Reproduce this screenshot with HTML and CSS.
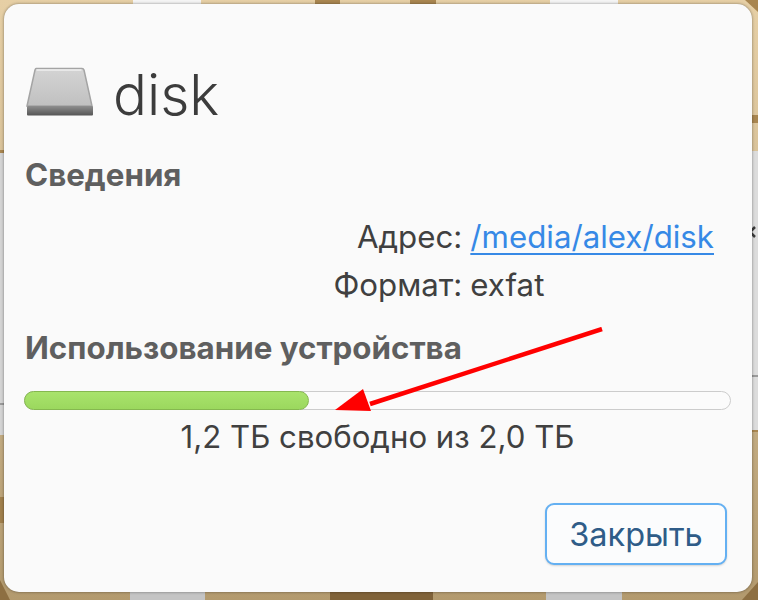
FILE: index.html
```html
<!DOCTYPE html>
<html lang="ru">
<head>
    <meta charset="UTF-8">
    <title>disk</title>
    <link rel="stylesheet" href="styles.css">
</head>
<body>

    <!-- Wallpaper peeking out around the dialog -->
    <svg class="wallpaper" width="758" height="600" viewBox="0 0 758 600">
        <defs>
            <linearGradient id="sand" x1="0" y1="0" x2="0" y2="1">
                <stop offset="0" stop-color="#e6cfa5"/>
                <stop offset="0.5" stop-color="#cdb78f"/>
                <stop offset="1" stop-color="#b39a6e"/>
            </linearGradient>
        </defs>
        <rect width="758" height="600" fill="url(#sand)"/>
        <!-- top edge -->
        <rect x="133" y="0" width="68" height="5" fill="#f4f4f4"/>
        <rect x="550" y="0" width="68" height="5" fill="#f4f4f4"/>
        <rect x="315" y="0" width="25" height="5" fill="#a98650"/>
        <rect x="410" y="0" width="26" height="5" fill="#a98650"/>
        <!-- bottom edge -->
        <rect x="130" y="592" width="75" height="8" fill="#c4c4c4"/>
        <rect x="546" y="592" width="76" height="8" fill="#c4c4c4"/>
        <rect x="330" y="592" width="103" height="8" fill="#80633a"/>
        <!-- left edge -->
        <rect x="0" y="152" width="5" height="283" fill="#d4d4d4"/>
        <rect x="0" y="403" width="5" height="2" fill="#9a9a9a"/>
        <rect x="0" y="150" width="5" height="3" fill="#a98650"/>
        <rect x="0" y="497" width="5" height="26" fill="#a07f4c"/>
        <polygon points="0,600 0,580 10,600" fill="#8d6f42"/>
        <!-- right edge -->
        <rect x="751" y="115" width="7" height="8" fill="#a98650"/>
        <rect x="751" y="151" width="7" height="280" fill="#dcdcdc"/>
        <rect x="751" y="375" width="7" height="2" fill="#9a9a9a"/>
        <rect x="751" y="430" width="7" height="2" fill="#a98650"/>
        <polygon points="745,0 758,0 758,12" fill="#a98650"/>
        <polygon points="758,582 758,600 742,600" fill="#8d6f42"/>
        <path d="M755 227l-5 5 5 5" fill="none" stroke="#3a3a3a" stroke-width="2.5"/>
    </svg>

    <div class="dialog">
        <div class="dialog-head">
            <svg class="disk-icon" width="68" height="50" viewBox="0 0 68 50">
                <defs>
                    <linearGradient id="diskTop" x1="0" y1="0" x2="0" y2="1">
                        <stop offset="0" stop-color="#d4d4d4"/>
                        <stop offset="1" stop-color="#c0c0c0"/>
                    </linearGradient>
                    <linearGradient id="diskFront" x1="0" y1="0" x2="0" y2="1">
                        <stop offset="0" stop-color="#8e8e8e"/>
                        <stop offset="1" stop-color="#555555"/>
                    </linearGradient>
                </defs>
                <path d="M10 1.5h46q1.500 0 2 1.500l8 36h-65l8-36q.5-1.500 1-1.500z" fill="url(#diskTop)" stroke="#a4a4a4" stroke-width="1.500"/>
                <path d="M10.500 3h45" stroke="#efefef" stroke-width="1.500"/>
                <rect x="1" y="39" width="66" height="9.500" rx="1" fill="url(#diskFront)"/>
            </svg>
            <h1 class="dialog-title">disk</h1>
        </div>

        <h2 class="section-title">Сведения</h2>
        <div class="info-grid">
            <span class="info-label">Адрес:</span>
            <a class="info-link" href="#">/media/alex/disk</a>
            <span class="info-label">Формат:</span>
            <span>exfat</span>
        </div>

        <h2 class="section-title usage-title">Использование устройства</h2>
        <div class="usage-bar">
            <div class="usage-fill" style="width: 40.4%"></div>
        </div>
        <div class="usage-text">1,2 ТБ свободно из 2,0 ТБ</div>

        <div class="dialog-actions">
            <button class="close-btn">Закрыть</button>
        </div>

        <!-- Red annotation arrow drawn on the screenshot -->
        <svg class="arrow" width="290" height="100" viewBox="0 0 290 100">
            <path d="M267 2L35 77" stroke="#ff0000" stroke-width="4.500" fill="none"/>
            <polygon points="0,83 28,62 36,84" fill="#ff0000"/>
        </svg>
    </div>

</body>
</html>
```

FILE: styles.css
```css
* {
    box-sizing: border-box;
}

html, body {
    height: 100%;
}

body {
    margin: 0;
    padding: 4px 6px 8px 4px;
    overflow: hidden;
    font-family: 'Inter', 'Noto Sans', sans-serif;
    color: #404040;
    position: relative;
}

.wallpaper {
    position: absolute;
    top: 0;
    left: 0;
}

.dialog {
    position: relative;
    height: 100%;
    display: flex;
    flex-direction: column;
    padding: 0 21px 27px 20px;
    background-color: #fafafa;
    border-radius: 15px;
    box-shadow: 0 0 3px rgba(0, 0, 0, 0.45);
}

.dialog-head {
    display: flex;
    align-items: center;
    gap: 19px;
    margin-top: 57px;
    height: 68px;
}

.disk-icon {
    flex-shrink: 0;
    margin: -7px 0 0 2px;
}

.dialog-title {
    margin: 0;
    font-size: 56.5px;
    font-weight: 300;
    line-height: 68px;
    color: #3c3c3c;
}

.section-title {
    margin: 0;
    padding-left: 1px;
    font-size: 31.3px;
    font-weight: 700;
    line-height: 34px;
    color: #5f5f5f;
}

.dialog-head + .section-title {
    margin-top: 29px;
}

.info-grid {
    display: grid;
    grid-template-columns: auto auto;
    justify-content: end;
    column-gap: 8px;
    row-gap: 10px;
    margin-top: 26px;
    padding-right: 17px;
    font-size: 31.25px;
    line-height: 38px;
}

.info-label {
    text-align: right;
}

.info-link {
    color: #3689e6;
    text-decoration: underline;
    text-underline-offset: 5px;
    text-decoration-thickness: 2px;
}

.usage-title {
    margin-top: 27px;
}

.usage-bar {
    margin-top: 26px;
    height: 19px;
    background-color: #fbfbfb;
    border: 1px solid #cccccc;
    border-radius: 10px;
}

.usage-fill {
    height: 19px;
    margin: -1px 0 0 -1px;
    background: linear-gradient(#a9e36c, #9bd85e);
    border: 1px solid #85b84f;
    border-radius: 10px;
}

.usage-text {
    margin-top: 9px;
    text-align: center;
    font-size: 31.2px;
    line-height: 36px;
}

.dialog-actions {
    margin-top: auto;
    display: flex;
    justify-content: flex-end;
    padding-right: 4px;
}

.close-btn {
    width: 182px;
    height: 62px;
    font-family: inherit;
    font-size: 32.5px;
    color: #2f5c88;
    background-color: #fbfcfd;
    border: 2px solid #64b0f2;
    border-radius: 9px;
    box-shadow: 0 1px 2px rgba(0, 0, 0, 0.15);
    cursor: pointer;
}

.arrow {
    position: absolute;
    left: 331px;
    top: 323px;
}
```
